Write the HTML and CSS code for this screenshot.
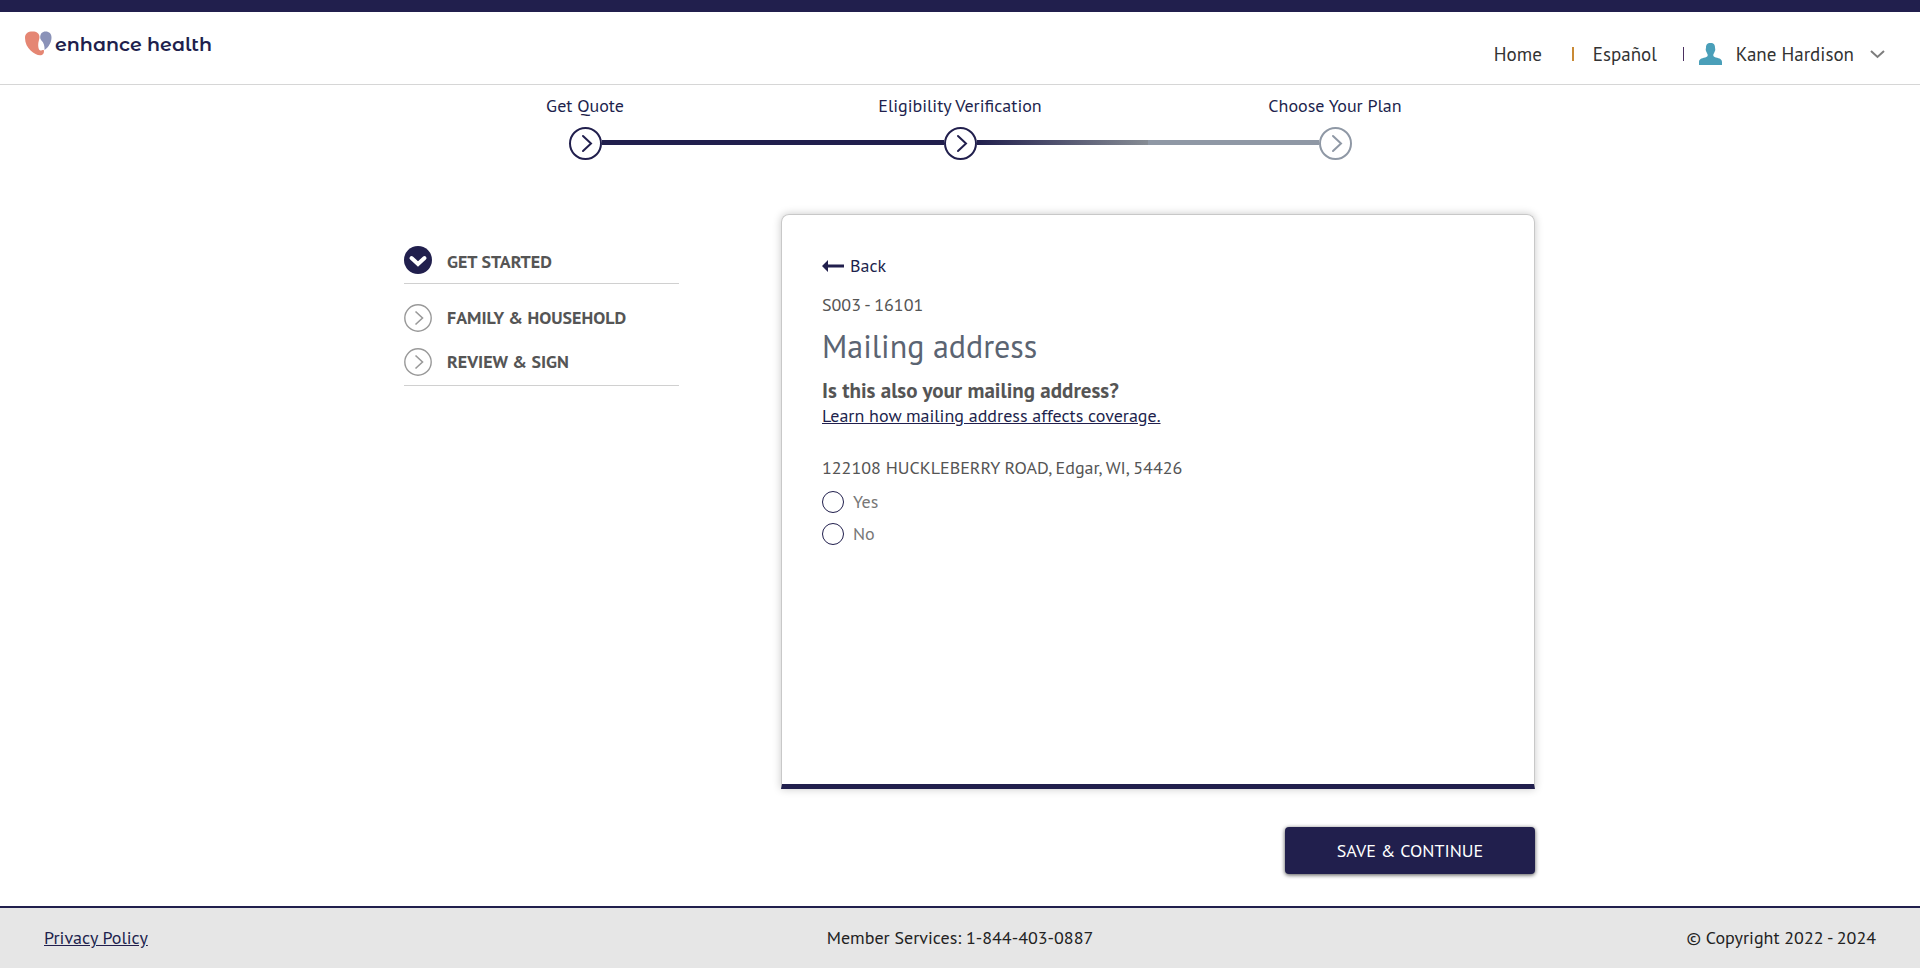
FILE: index.html
```html
<!DOCTYPE html>
<html lang="en">
<head>
<meta charset="utf-8">
<meta name="viewport" content="width=device-width, initial-scale=1">
<title>Mailing address - enhance health</title>
<link rel="stylesheet" href="styles.css">
</head>
<body>
<header class="header">
  <a class="logo" href="#">
    <svg viewBox="0 0 27 25" width="27" height="25" aria-hidden="true">
      <path fill="#e58673" d="M0 7C0 2.300 3 .5 7.500 .5c4.300 0 7 2 7 5.500 0 2.500-1.400 4.500-1.300 8 0 2.700.8 5.500 2.300 5.500 1.300 0 1.700-.7 3.300-.6.8 3.200-1.100 5.400-3.800 5.400C10 24.300 0 17.500 0 7z"/>
      <path fill="#8a92b8" d="M15.200 6.500C15.200 2.700 17.200.5 20.600.5c3.700 0 5.900 2.200 5.900 5.900 0 4.700-2.600 9.300-6.900 12.600.1-4.500-1-7-2.700-9-1-1.200-1.700-2-1.700-3.500z"/>
    </svg>
    <span class="logo-name">enhance health</span>
  </a>
  <nav class="nav" aria-label="Account">
    <a class="nav-link" href="#">Home</a>
    <span class="nav-bar nav-bar-gold"></span>
    <a class="nav-link" href="#">Español</a>
    <span class="nav-bar"></span>
    <button class="user" type="button">
      <svg viewBox="0 0 23 22" width="23" height="22" aria-hidden="true"><path fill="#4a9fb9" d="M11.500 0C15 0 16 1.800 16 4.500c0 1 .5 1.300.2 2.700-.2 1.200-.7 1.300-.9 2.200-.3 1-1 1.600-1 2.600 0 1.500.7 2 2.500 2.400 4 .9 6.200 1.800 6.200 4.600v3H0v-3c0-2.800 2.200-3.700 6.200-4.600 1.800-.4 2.500-.9 2.500-2.400 0-1-.7-1.600-1-2.600-.2-.9-.7-1-.9-2.200C6.500 5.800 7 5.500 7 4.500 7 1.800 8 0 11.500 0z"/></svg>
      <span class="user-name">Kane Hardison</span>
      <svg viewBox="0 0 15 9" width="15" height="9" aria-hidden="true"><path fill="none" stroke="#7d7d7d" stroke-width="2" d="M1 1l6.500 6L14 1"/></svg>
    </button>
  </nav>
</header>

<ol class="steps">
  <li class="step">
    <span>Get Quote</span>
    <div class="track">
      <i class="line"></i>
      <svg class="dot" viewBox="0 0 33 33" aria-hidden="true"><circle cx="16.500" cy="16.500" r="15.500"/><path d="M14 9l8 7.500-8 7.500"/></svg>
      <i class="line line-done"></i>
    </div>
  </li>
  <li class="step" aria-current="step">
    <span>Eligibility Verification</span>
    <div class="track">
      <i class="line line-done"></i>
      <svg class="dot" viewBox="0 0 33 33" aria-hidden="true"><circle cx="16.500" cy="16.500" r="15.500"/><path d="M14 9l8 7.500-8 7.500"/></svg>
      <i class="line line-fade"></i>
    </div>
  </li>
  <li class="step">
    <span>Choose Your Plan</span>
    <div class="track">
      <i class="line line-todo"></i>
      <svg class="dot dot-todo" viewBox="0 0 33 33" aria-hidden="true"><circle cx="16.500" cy="16.500" r="15.500"/><path d="M14 9l8 7.500-8 7.500"/></svg>
      <i class="line"></i>
    </div>
  </li>
</ol>

<main class="main">
  <nav class="sections" aria-label="Application sections">
    <a class="section section-open" href="#">
      <svg class="section-icon" viewBox="0 0 28 28" aria-hidden="true"><circle cx="14" cy="14" r="14" fill="#211f4d"/><path fill="none" stroke="#fff" stroke-width="4" stroke-linecap="round" d="M7.500 12l6.500 6 6.500-6"/></svg>
      <span>GET STARTED</span>
    </a>
    <a class="section" href="#">
      <svg class="section-icon" viewBox="0 0 28 28" aria-hidden="true"><g fill="none" stroke="#999"><circle cx="14" cy="14" r="13.200" stroke-width="1.400"/><path stroke-width="1.600" d="M11.500 7.500l7 6.500-7 6.500"/></g></svg>
      <span>FAMILY &amp; HOUSEHOLD</span>
    </a>
    <a class="section" href="#">
      <svg class="section-icon" viewBox="0 0 28 28" aria-hidden="true"><g fill="none" stroke="#999"><circle cx="14" cy="14" r="13.200" stroke-width="1.400"/><path stroke-width="1.600" d="M11.500 7.500l7 6.500-7 6.500"/></g></svg>
      <span>REVIEW &amp; SIGN</span>
    </a>
  </nav>

  <form class="form">
    <div class="card">
      <a class="back" href="#">
        <svg viewBox="0 0 22 12" width="22" height="12" aria-hidden="true"><path fill="#211f4d" d="M0 6l6-6v4.500h16v3H6V12z"/></svg>
        <span>Back</span>
      </a>
      <p class="code">S003 - 16101</p>
      <h1 class="title">Mailing address</h1>
      <h2 class="question" id="question">Is this also your mailing address?</h2>
      <a class="learn" href="#">Learn how mailing address affects coverage.</a>
      <p class="address">122108 HUCKLEBERRY ROAD, Edgar, WI, 54426</p>
      <div class="options" role="radiogroup" aria-labelledby="question">
        <label class="option"><input class="radio" type="radio" name="same" value="yes">Yes</label>
        <label class="option"><input class="radio" type="radio" name="same" value="no">No</label>
      </div>
    </div>
    <button class="save" type="button">SAVE &amp; CONTINUE</button>
  </form>
</main>

<footer class="footer">
  <a class="policy" href="#">Privacy Policy</a>
  <span>Member Services: 1-844-403-0887</span>
  <span class="copyright">© Copyright 2022 - 2024</span>
</footer>
</body>
</html>
```
FILE: styles.css
```css
* { box-sizing: border-box; }

body {
  margin: 0;
  min-height: 100vh;
  display: flex;
  flex-direction: column;
  border-top: 12px solid #211f4d;
  background: #fff;
  color: #555;
  font: 18px/24px "PT Sans", "Noto Sans", sans-serif;
}

a { color: #211f4d; text-decoration: none; }
p, h1, h2 { margin: 0; }

.header {
  display: flex;
  justify-content: space-between;
  padding: 13px 35px 0 25px;
  min-height: 73px;
  border-bottom: 1px solid #d6d6d6;
}

.logo {
  display: flex;
  align-items: center;
  align-self: flex-start;
  gap: 3px;
  height: 36px;
  font: 600 19px/24px "Montserrat Alternates", Inter, sans-serif;
}
.logo-name { padding-top: 4px; }

.nav {
  display: flex;
  align-items: center;
  align-self: flex-start;
  margin-top: 17px;
  color: #333;
  font-size: 19px;
}
.nav-link { color: #333; }
.nav-bar { width: 1px; height: 14px; margin: 0 15px 0 26px; background: #4b3060; }
.nav-bar-gold { width: 2px; margin: 0 19px 0 30px; background: #c98a35; }
.user {
  display: flex;
  align-items: center;
  padding: 0;
  border: 0;
  background: none;
  color: #333;
  font: inherit;
}
.user-name { margin: 0 16px 0 14px; }

.steps {
  display: grid;
  grid-template-columns: repeat(3, 1fr);
  width: 100%;
  max-width: 1125px;
  margin: 0 auto;
  padding: 9px 0 0;
  list-style: none;
  color: #211f4d;
  text-align: center;
}
.track { display: flex; align-items: center; margin-top: 9px; }
.line { flex: 1; height: 5px; margin-bottom: 2px; }
.line-done { background: #211f4d; }
.line-fade { background: linear-gradient(90deg, #211f4d, #868c94); }
.line-todo { background: #8f98a5; }
.dot {
  width: 33px;
  height: 33px;
  fill: none;
  stroke: #211f4d;
  stroke-width: 2;
  stroke-linecap: round;
}
.dot-todo { stroke: #8f98a5; }

.main {
  display: flex;
  align-items: flex-start;
  gap: 102px;
  width: 100%;
  max-width: 1150px;
  margin: 0 auto;
  padding: 54px 0 32px 19px;
  flex: 1;
}

.sections {
  flex: 0 0 275px;
  display: flex;
  flex-direction: column;
  gap: 16px;
  padding: 32px 0 9px;
  border-bottom: 1px solid #d0d0d0;
}
.section {
  display: flex;
  align-items: center;
  gap: 15px;
  color: #555;
  font-weight: 600;
}
.section-open {
  align-items: flex-end;
  padding-bottom: 9px;
  margin-bottom: 4px;
  border-bottom: 1px solid #d0d0d0;
}
.section-icon { flex: none; width: 28px; height: 28px; }

.form { flex: 1; display: flex; flex-direction: column; align-items: flex-end; gap: 38px; }

.card {
  width: 100%;
  min-height: 575px;
  padding: 39px 40px;
  border: 1px solid #c8c8c8;
  border-bottom: 5px solid #211f4d;
  border-radius: 8px 8px 0 0;
  box-shadow: 0 0 8px rgba(0, 0, 0, .22);
}
.back { display: flex; align-items: center; gap: 6px; }
.code { margin-top: 15px; }
.title { margin-top: 9px; color: #5b6472; font-size: 32px; line-height: 40px; font-weight: 400; }
.question { margin: 12px 0 0; font-size: 21px; line-height: 26px; font-weight: 600; }
.learn { text-decoration: underline; }
.address { margin-top: 28px; }
.options { display: flex; flex-direction: column; gap: 8px; margin-top: 10px; color: #777; }
.option { display: flex; align-items: center; gap: 9px; }
.radio {
  appearance: none;
  width: 22px;
  height: 22px;
  margin: 0;
  border: 1px solid #211f4d;
  border-radius: 50%;
}
.radio:checked { background: #211f4d; box-shadow: inset 0 0 0 4px #fff; }

.save {
  min-width: 250px;
  padding: 12px 24px 11px;
  border: 0;
  border-radius: 4px;
  background: #211f4d;
  box-shadow: 0 1px 4px rgba(0, 0, 0, .7);
  color: #fff;
  font: inherit;
}

.footer {
  display: grid;
  grid-template-columns: 1fr auto 1fr;
  padding: 18px 44px 19px;
  border-top: 2px solid #211f4d;
  background: #e6e6e6;
  color: #222;
}
.policy { justify-self: start; text-decoration: underline; }
.copyright { text-align: right; }
```
